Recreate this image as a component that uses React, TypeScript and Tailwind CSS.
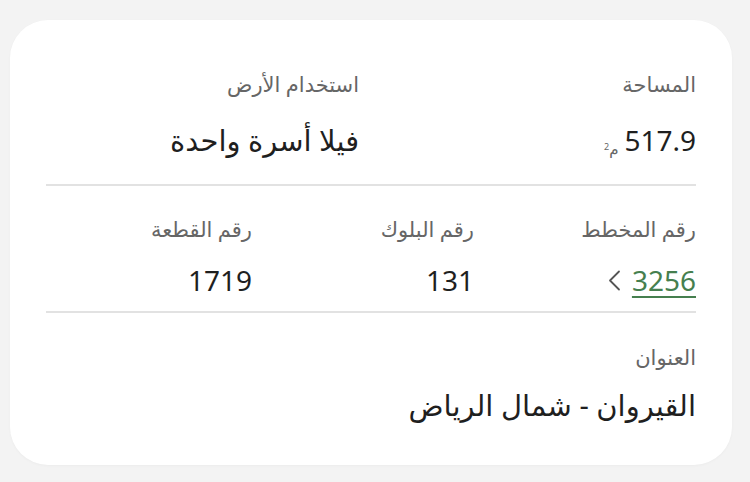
const font = { fontFamily: '"Noto Sans", "DejaVu Sans", sans-serif' };

const Label = ({ children }: { children: React.ReactNode }) => (
  <div className="text-[21px] leading-[28px] text-[#666666]">{children}</div>
);

const Value = ({ children }: { children: React.ReactNode }) => (
  <div className="text-[28px] leading-[36px] text-[#1f1f1f]">{children}</div>
);

// thin "<" arrow next to the plan number
const Arrow = () => (
  <svg width="13" height="21" viewBox="0 0 13 21" fill="none" className="text-[#555]">
    <path d="M11 1.5 2 10.5l9 9" stroke="currentColor" strokeWidth="1.8" strokeLinecap="round" strokeLinejoin="round" />
  </svg>
);

export default function App() {
  return (
    <div
      dir="rtl"
      style={font}
      className="min-h-[482px] w-[750px] bg-[#f3f3f3] pt-5 pr-[18px] pl-[10px] pb-4"
    >
      <div className="rounded-[38px] bg-white px-[36px] pt-[50px] pb-[42px] shadow-[0_1px_3px_rgba(0,0,0,0.03)]">
        {/* area / land use */}
        <div className="grid grid-cols-2 gap-6">
          <div>
            <Label>المساحة</Label>
            <div className="mt-6 flex items-baseline gap-1.5">
              <Value>517.9</Value>
              <span className="translate-y-[3px] text-[15px] text-[#666]">
                م<sup className="text-[9px]">2</sup>
              </span>
            </div>
          </div>
          <div>
            <Label>استخدام الأرض</Label>
            <div className="mt-6 text-[29px] leading-[36px] text-[#1f1f1f]">
              فيلا أسرة واحدة
            </div>
          </div>
        </div>

        <div className="mt-[26px] h-[2px] bg-[#e2e2e2]" />

        {/* plan / block / plot */}
        <div className="mt-[29px] grid grid-cols-3 gap-4">
          <div>
            <Label>رقم المخطط</Label>
            <div className="mt-[19px] flex items-center gap-[11px]">
              <span className="text-[28px] leading-[36px] text-[#467f4f] underline decoration-[2px] underline-offset-[5px]">
                3256
              </span>
              <Arrow />
            </div>
          </div>
          <div>
            <Label>رقم البلوك</Label>
            <div className="mt-[19px]">
              <Value>131</Value>
            </div>
          </div>
          <div>
            <Label>رقم القطعة</Label>
            <div className="mt-[19px]">
              <Value>1719</Value>
            </div>
          </div>
        </div>

        <div className="mt-[13px] h-[2px] bg-[#e2e2e2]" />

        {/* address */}
        <div className="mt-[30px]">
          <Label>العنوان</Label>
          <div className="mt-4 text-[29px] leading-[36px] text-[#1f1f1f]">
            القيروان - شمال الرياض
          </div>
        </div>
      </div>
    </div>
  );
}
